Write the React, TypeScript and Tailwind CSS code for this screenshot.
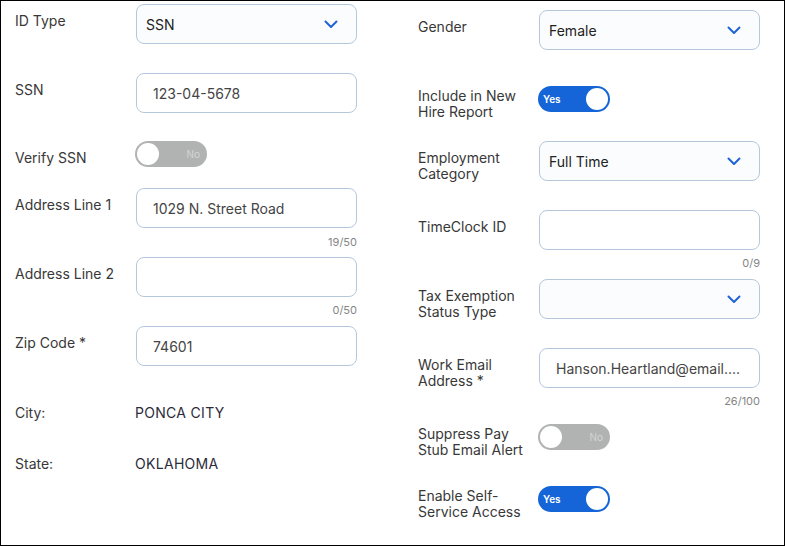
import React, { ReactNode } from 'react';

const Chevron = () => (
  <svg width="14" height="9" viewBox="0 0 14 9" fill="none" className="shrink-0">
    <polyline points="1.5,1.5 7,7 12.5,1.5" stroke="#1f63d6" strokeWidth="2" strokeLinecap="round" strokeLinejoin="round" />
  </svg>
);

interface RowProps {
  label: ReactNode;
  labelClass?: string;
  className?: string;
  children?: ReactNode;
}

const Row = ({ label, labelClass = 'mt-[9px]', className = '', children }: RowProps) => (
  <div className={`flex items-start ${className}`}>
    <div className={`w-[121px] shrink-0 pr-1 text-[14px] leading-4 text-[#383838] ${labelClass}`}>{label}</div>
    <div className="w-[221px]">{children}</div>
  </div>
);

const Select = ({ value }: { value?: string }) => (
  <div className="h-[40px] rounded-[8px] border border-[#b5c8db] bg-[#fbfcfd] flex items-center justify-between pl-[9px] pr-[18px]">
    <span className="text-[14px] text-[#222]">{value}</span>
    <Chevron />
  </div>
);

const TextBox = ({ value }: { value?: string }) => (
  <div className="h-[40px] rounded-[8px] border border-[#b5c8db] bg-white flex items-center px-4">
    <span className="text-[14px] text-[#444] truncate">{value}</span>
  </div>
);

const Counter = ({ text, className = '' }: { text: string; className?: string }) => (
  <div className={`text-right text-[11px] leading-[14px] text-[#858585] ${className}`}>{text}</div>
);

const Toggle = ({ on }: { on: boolean }) =>
  on ? (
    <div className="w-[72px] h-[26px] rounded-full bg-[#1565d8] flex items-center justify-between pl-[5px] pr-[2px]">
      <span className="text-[10px] font-semibold text-white">Yes</span>
      <span className="w-[22px] h-[22px] rounded-full bg-white" />
    </div>
  ) : (
    <div className="w-[72px] h-[26px] rounded-full bg-[#b1b2b2] flex items-center justify-between pl-[2px] pr-[7px]">
      <span className="w-[22px] h-[22px] rounded-full bg-white" />
      <span className="text-[10px] text-[#d4d4d4]">No</span>
    </div>
  );

export default function App() {
  return (
    <div
      className="w-[785px] h-[546px] border border-black bg-white flex"
      style={{ fontFamily: 'Inter, "Noto Sans", sans-serif' }}
    >
      {/* left column */}
      <div className="ml-[14px] w-[342px] flex flex-col">
        <Row label="ID Type" className="mt-[3px]">
          <Select value="SSN" />
        </Row>
        <Row label="SSN" className="mt-[29px]">
          <TextBox value="123-04-5678" />
        </Row>
        <Row label="Verify SSN" className="mt-[28px] h-[26px]">
          <div className="-ml-[1px]">
            <Toggle on={false} />
          </div>
        </Row>
        <Row label="Address Line 1" className="mt-[21px]">
          <TextBox value="1029 N. Street Road" />
          <Counter text="19/50" className="mt-[7px]" />
        </Row>
        <Row label="Address Line 2" className="mt-[8px]">
          <TextBox />
          <Counter text="0/50" className="mt-[6px]" />
        </Row>
        <Row label="Zip Code *" className="mt-[9px]">
          <TextBox value="74601" />
        </Row>
        <Row label="City:" labelClass="" className="mt-[39px]">
          <div className="-ml-[1px] text-[14px] leading-4 tracking-[0.3px] text-[#2b2b3a]">PONCA CITY</div>
        </Row>
        <Row label="State:" labelClass="" className="mt-[35px]">
          <div className="-ml-[1px] text-[14px] leading-4 tracking-[0.3px] text-[#2b2b3a]">OKLAHOMA</div>
        </Row>
      </div>

      {/* right column */}
      <div className="ml-[61px] w-[342px] flex flex-col">
        <Row label="Gender" className="mt-[9px]">
          <Select value="Female" />
        </Row>
        <Row label="Include in New Hire Report" labelClass="mt-[2px]" className="mt-[36px] h-[26px]">
          <div className="-ml-[1px]">
            <Toggle on />
          </div>
        </Row>
        <Row label="Employment Category" className="mt-[29px] h-[40px]">
          <Select value="Full Time" />
        </Row>
        <Row label="TimeClock ID" className="mt-[29px]">
          <TextBox />
          <Counter text="0/9" className="mt-[6px]" />
        </Row>
        <Row label="Tax Exemption Status Type" className="mt-[9px] h-[40px]">
          <Select />
        </Row>
        <Row label="Work Email Address *" className="mt-[29px]">
          <TextBox value="Hanson.Heartland@email...." />
          <Counter text="26/100" className="mt-[6px]" />
        </Row>
        <Row label="Suppress Pay Stub Email Alert" labelClass="mt-[2px]" className="mt-[16px] h-[26px]">
          <div className="-ml-[1px]">
            <Toggle on={false} />
          </div>
        </Row>
        <Row label="Enable Self-Service Access" labelClass="mt-[2px]" className="mt-[36px] h-[26px]">
          <div className="-ml-[1px]">
            <Toggle on />
          </div>
        </Row>
      </div>
    </div>
  );
}
